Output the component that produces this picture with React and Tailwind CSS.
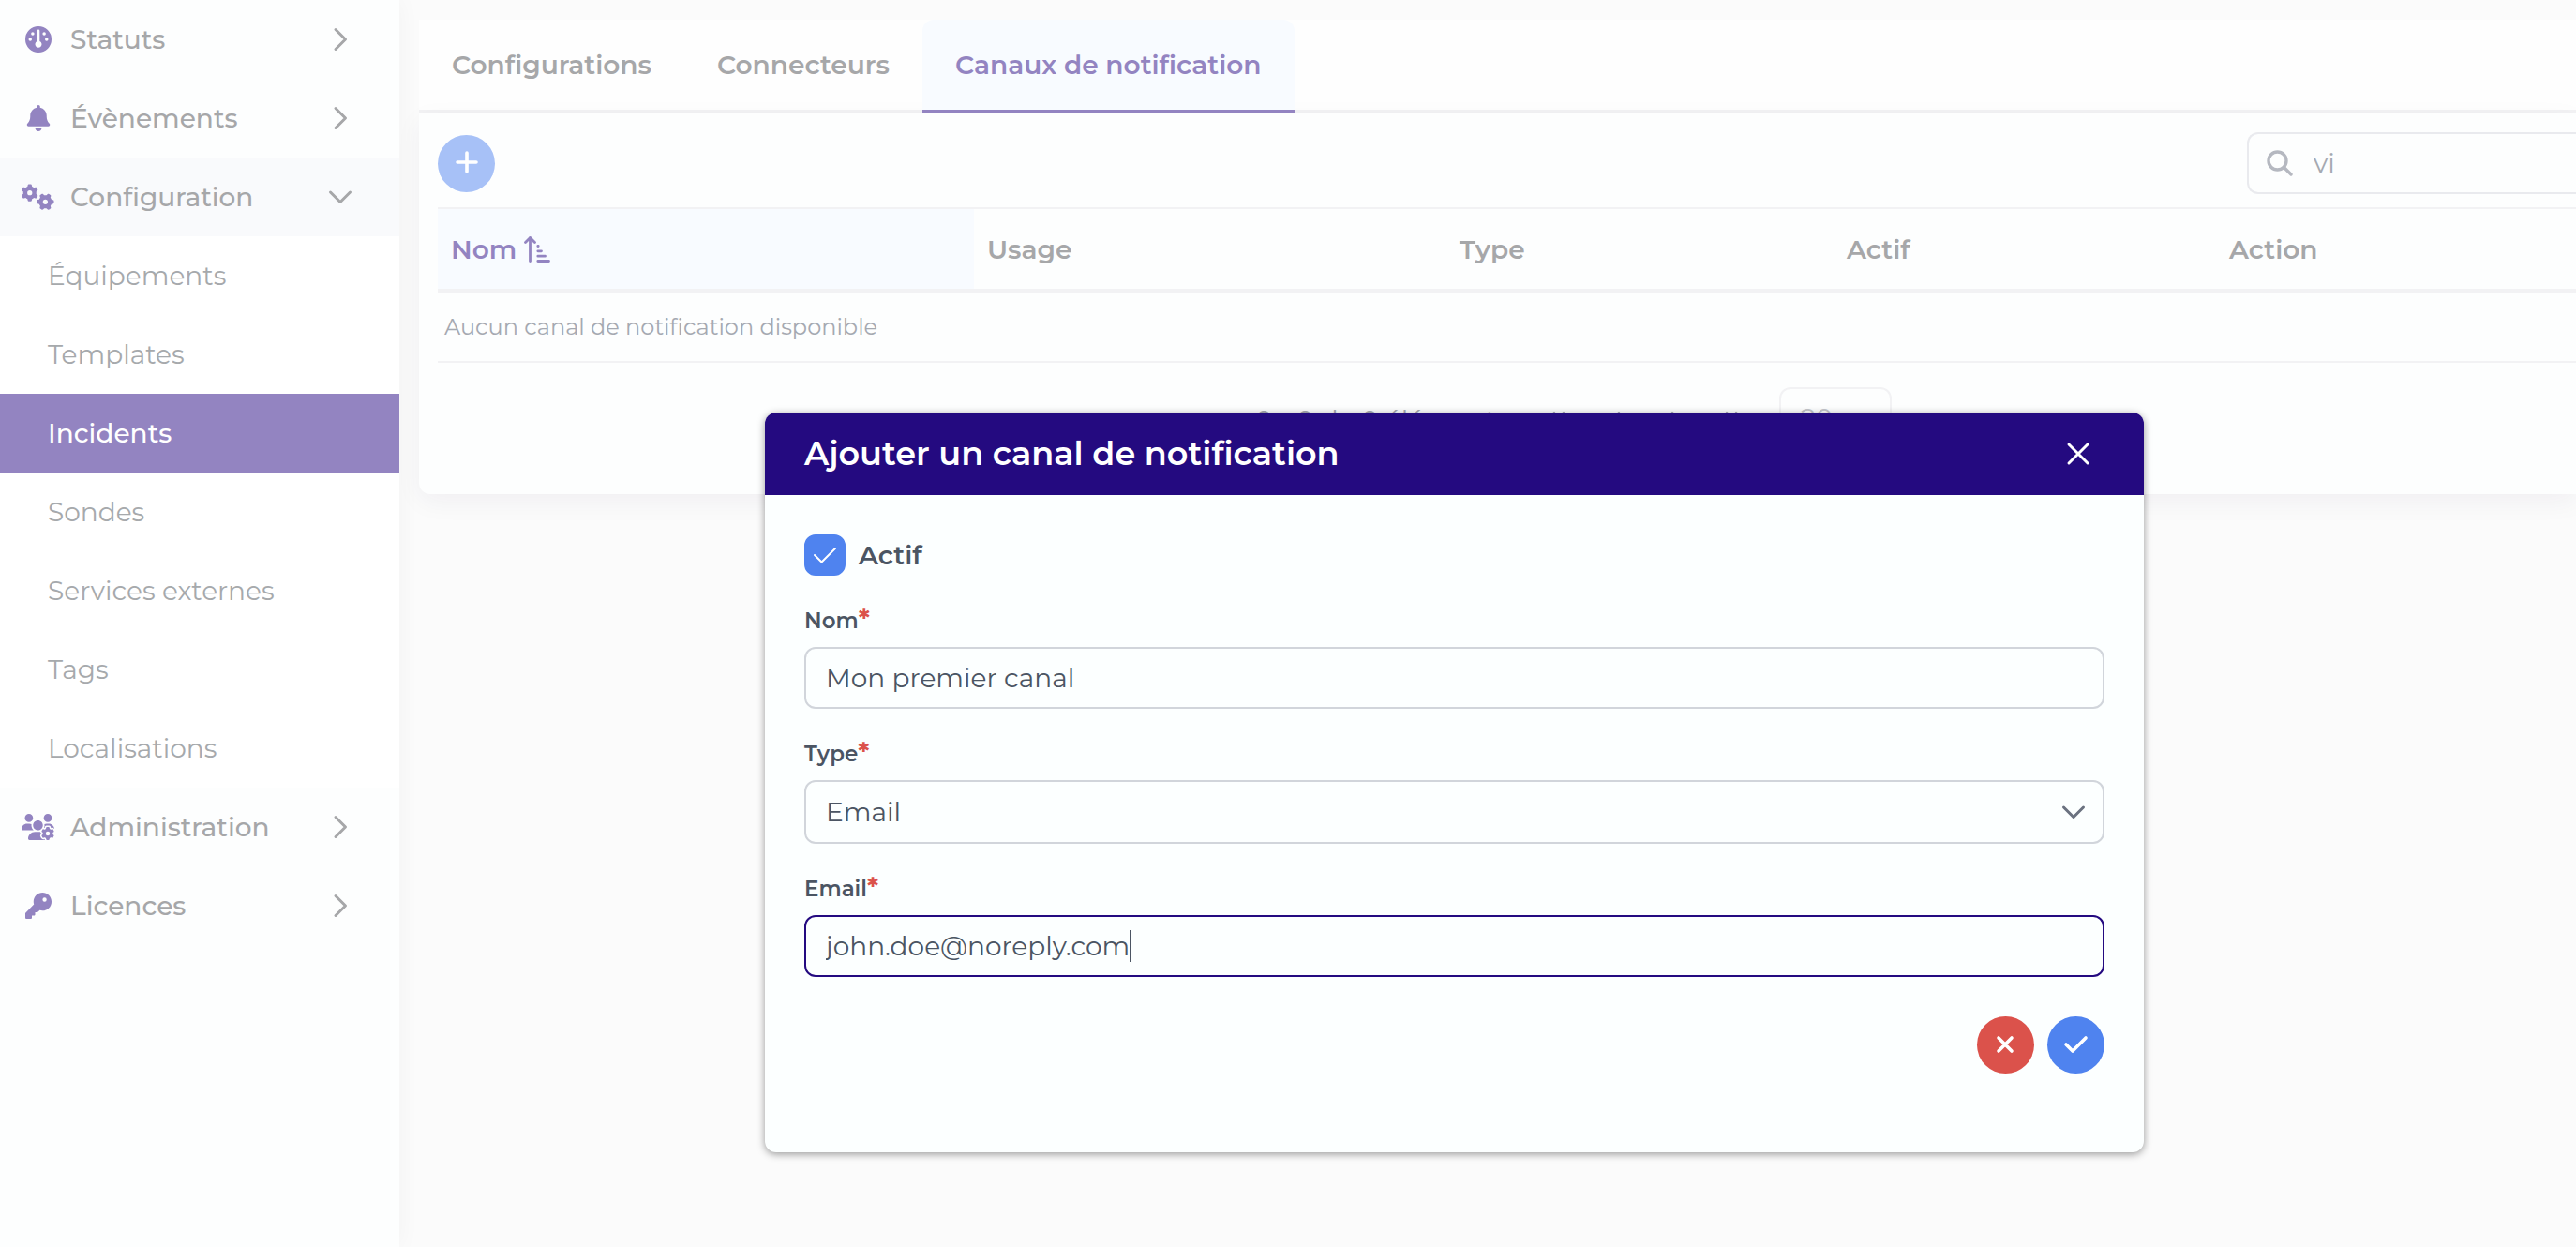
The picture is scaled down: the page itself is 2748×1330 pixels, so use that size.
/**
 * Incidents configuration page - notification channels with "add channel" dialog
 */
import { useState } from 'react';
import { FaGauge, FaBell, FaGears, FaUsersGear, FaKey } from 'react-icons/fa6';

const Stroke = ({ d, className, width = 3 }) => (
  <svg
    viewBox="0 0 28 28"
    className={className}
    fill="none"
    stroke="currentColor"
    strokeWidth={width}
    strokeLinecap="round"
    strokeLinejoin="round"
    aria-hidden="true"
  >
    <path d={d} />
  </svg>
);

const RIGHT = 'M9 3.5L19.5 14L9 24.5';
const DOWN = 'M3.5 9L14 19.5L24.5 9';
const CROSS = 'M4 4L24 24M24 4L4 24';
const CHECK = 'M3 14L10.5 21.5L25 7';

const menu = [
  { label: 'Statuts', icon: FaGauge },
  { label: 'Évènements', icon: FaBell },
  {
    label: 'Configuration',
    icon: FaGears,
    children: ['Équipements', 'Templates', 'Incidents', 'Sondes', 'Services externes', 'Tags', 'Localisations'],
  },
  { label: 'Administration', icon: FaUsersGear },
  { label: 'Licences', icon: FaKey },
];

const tabs = [
  { label: 'Configurations', width: 'w-[283px]' },
  { label: 'Connecteurs', width: 'w-[254px]' },
  { label: 'Canaux de notification', width: 'w-[397px]' },
];

const columns = [
  { label: 'Nom', width: 'w-[572px]' },
  { label: 'Usage', width: 'w-[504px]' },
  { label: 'Type', width: 'w-[413px]' },
  { label: 'Actif', width: 'w-[408px]' },
  { label: 'Action', width: '' },
];

const pages = [
  { label: 'Première page', d: 'M10 8L4 14L10 20M20 8L14 14L20 20' },
  { label: 'Page précédente', d: 'M17 8L11 14L17 20' },
  { label: 'Page suivante', d: 'M12 8L18 14L12 20' },
  { label: 'Dernière page', d: 'M8 8L14 14L8 20M18 8L24 14L18 20' },
];

const SortIcon = () => (
  <svg viewBox="0 0 28 28" className="h-7 w-7" fill="none" stroke="currentColor" strokeWidth="2.8" strokeLinecap="round" strokeLinejoin="round" aria-hidden="true">
    <path d="M6.5 26.5V1.5M1.5 6.5L6.5 1.5L11.5 6.5" />
    <path d="M14.8 10.5H15.2M14.8 15.8H18.5M14.8 21.2H22.5M14.8 26.5H26.5" />
  </svg>
);

const Sidebar = () => (
  <nav className="relative z-10 w-[426px] shrink-0 bg-[#fdfefe] shadow-[0_0_24px_rgba(0,0,0,0.04)]">
    <ul>
      {menu.map(({ label, icon: Icon, children }) => (
        <li key={label}>
          <a
            href="#"
            className={`flex h-[84px] items-center pr-[49px] pl-5 text-[28px] font-medium text-[#a6a7a9] ${children ? 'bg-[#f9fafc]' : ''}`}
          >
            <span className="mr-[14px] flex w-[41px] justify-center text-[#9384c1]">
              <Icon className={children || label === 'Administration' ? 'h-7 w-[35px]' : 'h-7 w-7'} />
            </span>
            {label}
            <Stroke d={children ? DOWN : RIGHT} className="ml-auto h-7 w-7" />
          </a>
          {children && (
            <ul className="bg-white">
              {children.map((child) => (
                <li key={child}>
                  <a
                    href="#"
                    className={`flex h-[84px] items-center pl-[51px] text-[28px] ${child === 'Incidents' ? 'bg-[#9384c1] font-medium text-white' : 'text-[#a6a9ac]'}`}
                  >
                    {child}
                  </a>
                </li>
              ))}
            </ul>
          )}
        </li>
      ))}
    </ul>
  </nav>
);

const Field = ({ id, label, children }) => (
  <div className="mt-8">
    <label htmlFor={id} className="flex h-8 items-center text-[23px] font-semibold text-[#4b5563]">
      {label}
      <span className="h-9 text-[28px] leading-8 font-bold text-[#db524b]">*</span>
    </label>
    <div className="mt-3">{children}</div>
  </div>
);

const ChannelDialog = () => {
  const [active, setActive] = useState(true);
  const [name, setName] = useState('Mon premier canal');
  const [email, setEmail] = useState('john.doe@noreply.com');

  return (
    <div
      role="dialog"
      aria-labelledby="dialog-title"
      className="absolute top-[440px] left-[816px] z-20 w-[1471px] overflow-hidden rounded-xl bg-[#fcffff] pb-[84px] shadow-[0_2px_8px_rgba(0,0,0,0.4)]"
    >
      <div className="flex h-[88px] items-center justify-between bg-[#240a80] px-[42px] text-white">
        <h2 id="dialog-title" className="text-[35px] font-semibold">Ajouter un canal de notification</h2>
        <button type="button" aria-label="Fermer" className="flex h-14 w-14 items-center justify-center">
          <Stroke d={CROSS} width={3} className="h-7 w-7" />
        </button>
      </div>

      <form className="px-[42px] pt-[42px]" onSubmit={(e) => e.preventDefault()}>
        <div className="flex h-11 items-center gap-[14px]">
          <span className="relative h-11 w-11">
            <input
              id="active"
              type="checkbox"
              checked={active}
              onChange={(e) => setActive(e.target.checked)}
              className="peer block h-11 w-11 appearance-none rounded-xl border-2 border-[#d1d5db] checked:border-[#4f83ef] checked:bg-[#4f83ef]"
            />
            <Stroke d={CHECK} width={2} className="pointer-events-none absolute inset-2 h-7 w-7 text-white opacity-0 peer-checked:opacity-100" />
          </span>
          <label htmlFor="active" className="text-[28px] font-semibold text-[#4b5563]">Actif</label>
        </div>

        <Field id="name" label="Nom">
          <input
            id="name"
            type="text"
            value={name}
            onChange={(e) => setName(e.target.value)}
            className="block h-[66px] w-full rounded-xl border-2 border-[#d1d5db] px-[21px] text-[28px] text-[#4b5563] outline-none"
          />
        </Field>

        <Field id="type" label="Type">
          <div className="relative">
            <select
              id="type"
              className="block h-[68px] w-full appearance-none rounded-xl border-2 border-[#d1d5db] px-[21px] text-[28px] text-[#4b5563] outline-none"
            >
              <option>Email</option>
            </select>
            <Stroke d={DOWN} className="pointer-events-none absolute top-5 right-[19px] h-7 w-7 text-[#6b7280]" />
          </div>
        </Field>

        <Field id="email" label="Email">
          <div className="flex h-[66px] items-center rounded-xl border-2 border-[#240a80] px-[21px]">
            <input
              id="email"
              type="text"
              value={email}
              onChange={(e) => setEmail(e.target.value)}
              className="field-sizing-content text-[28px] text-[#4b5563] outline-none"
            />
            <span className="h-[34px] w-[2px] bg-[#4b5563]" />
          </div>
        </Field>

        <div className="mt-[42px] flex justify-end gap-[14px] text-white">
          <button type="button" aria-label="Annuler" className="flex h-[61px] w-[61px] items-center justify-center rounded-full bg-[#db524b]">
            <Stroke d="M6 6L20 20M20 6L6 20" width={3.6} className="h-7 w-7" />
          </button>
          <button type="submit" aria-label="Valider" className="flex h-[61px] w-[61px] items-center justify-center rounded-full bg-[#4f83ef]">
            <Stroke d="M3 13L10 20L24 6" width={3.6} className="h-7 w-7" />
          </button>
        </div>
      </form>
    </div>
  );
};

const App = () => {
  const [search, setSearch] = useState('vi');

  return (
    <div className="relative flex min-h-screen overflow-hidden bg-[#fbfbfb] font-['Montserrat','Inter',sans-serif]">
      <Sidebar />

      <main className="min-w-0 flex-1 pt-[21px] pl-[21px]">
        {/* Tabs */}
        <div role="tablist" className="flex border-b-4 border-[#f2f2f4] bg-[#fefefe]">
          {tabs.map((tab, i) => (
            <button
              key={tab.label}
              type="button"
              role="tab"
              aria-selected={i === 2}
              className={`-mb-1 h-[100px] border-b-4 px-[35px] text-left text-[28px] font-semibold whitespace-nowrap ${tab.width} ${
                i === 2 ? 'rounded-t-xl border-[#9384c1] bg-[#f8fbff] text-[#9384c1]' : 'border-transparent text-[#a6a7a9]'
              }`}
            >
              {tab.label}
            </button>
          ))}
        </div>

        {/* Channels */}
        <section className="rounded-bl-xl bg-[#fdfefe] pb-[22px] pl-5 shadow-[0_8px_28px_rgba(30,20,80,0.05)]">
          <div className="flex h-[100px] items-center justify-between pt-[6px]">
            <button type="button" aria-label="Ajouter" className="flex h-[61px] w-[61px] items-center justify-center rounded-full bg-[#a7c1f7] text-white">
              <Stroke d="M14 3V23M4 13H24" width={3.6} className="h-7 w-7" />
            </button>
            <label className="flex h-[66px] w-[351px] items-center rounded-l-xl border-2 border-r-0 border-[#e9eaee] pl-[19px]">
              <svg viewBox="0 0 28 28" className="h-7 w-7 text-[#b5b8c0]" fill="none" stroke="currentColor" strokeWidth="3.4" strokeLinecap="round" aria-hidden="true">
                <circle cx="11.5" cy="11.5" r="9.5" />
                <path d="M18.5 18.5L26 26" />
              </svg>
              <input
                type="text"
                aria-label="Rechercher"
                value={search}
                onChange={(e) => setSearch(e.target.value)}
                className="ml-[22px] min-w-0 flex-1 text-[28px] text-[#a5a9b1] outline-none"
              />
            </label>
          </div>

          <table className="w-full table-fixed border-separate border-spacing-0 text-left">
            <thead>
              <tr>
                {columns.map((col, i) => (
                  <th
                    key={col.label}
                    className={`h-[91px] border-t-2 border-b-4 border-[#f2f2f4] px-[14px] text-[28px] font-semibold ${col.width} ${
                      i === 0 ? 'bg-[#f8fbff] text-[#9384c1]' : 'text-[#a6a7a9]'
                    }`}
                  >
                    <span className="flex items-center gap-2">
                      {col.label}
                      {i === 0 && <SortIcon />}
                    </span>
                  </th>
                ))}
              </tr>
            </thead>
            <tbody>
              <tr>
                <td colSpan={5} className="h-[75px] border-b-2 border-[#f2f2f4] px-[7px] text-2xl text-[#a5a9b1]">
                  Aucun canal de notification disponible
                </td>
              </tr>
            </tbody>
          </table>

          {/* Paginator */}
          <div className="flex h-[118px] items-center pl-[872px] text-[28px] text-[#a5a9b1]">
            <span className="w-[302px] pt-1 whitespace-nowrap">0 - 0 de 0 éléments</span>
            <div className="flex w-[257px] items-center gap-[34px] pl-[7px]">
              {pages.map((page) => (
                <button key={page.label} type="button" aria-label={page.label}>
                  <Stroke d={page.d} width={2.4} className="h-7 w-7" />
                </button>
              ))}
            </div>
            <div className="relative text-[#c4c6cb]">
              <select aria-label="Lignes par page" className="h-[66px] w-[120px] appearance-none rounded-xl border-2 border-[#f2f2f4] pl-[21px] outline-none">
                <option>20</option>
              </select>
              <Stroke d={DOWN} width={2.4} className="pointer-events-none absolute top-5 right-[19px] h-7 w-7" />
            </div>
          </div>
        </section>
      </main>

      <ChannelDialog />
    </div>
  );
};

export default App;
